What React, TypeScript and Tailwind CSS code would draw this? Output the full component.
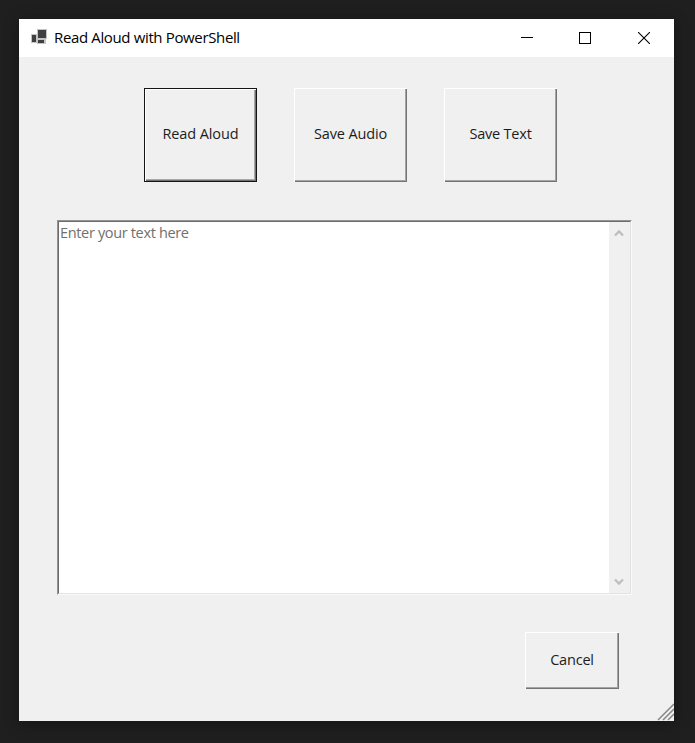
import type { ReactNode } from "react";

function TitleBar() {
  return (
    <header className="flex h-[38px] shrink-0 items-center bg-white text-black">
      <svg className="ml-[12px] h-5 w-[18px]" viewBox="0 0 18 20" shapeRendering="crispEdges">
        <path fill="#c4c4c4" d="M6 1h10v10H6zM0 6h6v9H0zM6 11h9v5H6z" />
        <path fill="#404040" d="M7 2h8v8H7zM1 7h4v7H1zM7 12h6v3H7z" />
      </svg>
      <h1 className="ml-[5px] pb-[2px] text-[15px] leading-5 font-normal tracking-[-0.36px] whitespace-nowrap">
        Read Aloud with PowerShell
      </h1>
      <div className="ml-auto flex h-full">
        <button aria-label="Minimize" className="flex w-[58px] items-center justify-center">
          <svg width="12" height="12" shapeRendering="crispEdges">
            <path d="M0 5.5h12" stroke="#000" />
          </svg>
        </button>
        <button aria-label="Maximize" className="flex w-[58px] items-center justify-center">
          <svg width="12" height="12" shapeRendering="crispEdges">
            <path d="M.5.5h11v11H.5z" fill="none" stroke="#000" />
          </svg>
        </button>
        <button aria-label="Close" className="flex w-[60px] items-center justify-center">
          <svg width="12" height="12">
            <path d="M0 0l12 12M12 0L0 12" stroke="#000" strokeWidth="1.1" />
          </svg>
        </button>
      </div>
    </header>
  );
}

function ClassicButton({ children, size, focused = false }: { children: ReactNode; size: string; focused?: boolean }) {
  return (
    <button
      className={`${size} flex items-center justify-center text-[14.5px] leading-5 text-[#1c1c1c] whitespace-nowrap ${
        focused
          ? "border border-[#141414] shadow-[inset_1px_1px_#fff,inset_-1px_-1px_#707070,inset_-2px_-2px_#a8a8a8]"
          : "shadow-[inset_1px_1px_#fff,inset_-1px_-1px_#747474,inset_-2px_-2px_#a4a4a4]"
      }`}
    >
      {children}
    </button>
  );
}

export default function App() {
  return (
    <main className="h-[743px] w-[695px] overflow-hidden bg-[#1f1f1f] pt-[19px] pl-[19px] font-['Open_Sans','Noto_Sans',sans-serif]">
      <section className="flex h-[702px] w-[655px] flex-col bg-[#f0f0f0] shadow-[0_3px_14px_rgba(0,0,0,0.35)]">
        <TitleBar />
        <div className="mt-[31px] ml-[125px] flex gap-[37px]">
          <ClassicButton size="w-[113px] h-[94px] pb-[2px]" focused>
            <span className="tracking-[-0.1px]">Read Aloud</span>
          </ClassicButton>
          <ClassicButton size="w-[113px] h-[94px] pb-[2px]">
            <span className="tracking-[-0.14px]">Save Audio</span>
          </ClassicButton>
          <ClassicButton size="w-[113px] h-[94px] pb-[2px]">
            <span className="tracking-[-0.2px]">Save Text</span>
          </ClassicButton>
        </div>
        <div className="mt-[38px] ml-[38px] flex h-[375px] w-[575px] border border-t-[#939393] border-r-[#fafafa] border-b-[#fafafa] border-l-[#939393]">
          <div className="flex w-full border border-t-[#6c6c6c] border-r-[#e0e0e0] border-b-[#e3e3e3] border-l-[#6c6c6c] bg-white">
            <p className="flex-1 pt-px pl-px text-[14.5px] leading-[20px] tracking-[-0.34px] text-[#707070]">Enter your text here</p>
            <div className="flex w-[21px] flex-col items-center justify-between bg-[#f0f0f0] pt-[7px] pr-[2px] pb-[7px]">
              <svg width="10" height="9" viewBox="0 0 10 9">
                <path d="M1 6.5l4-4 4 4" fill="none" stroke="#bebebe" strokeWidth="2.3" />
              </svg>
              <svg width="10" height="9" viewBox="0 0 10 9">
                <path d="M1 2.5l4 4 4-4" fill="none" stroke="#bebebe" strokeWidth="2.3" />
              </svg>
            </div>
          </div>
        </div>
        <div className="mt-[37px] ml-[506px]">
          <ClassicButton size="w-[94px] h-[57px] pb-[2px]">
            <span className="tracking-[-0.2px]">Cancel</span>
          </ClassicButton>
        </div>
        <svg className="mt-auto ml-auto" width="17" height="18" viewBox="0 0 17 18">
          <path d="M1 17L17 1M6 17L17 6M11 17l6-6" stroke="#858585" strokeWidth="1.5" />
        </svg>
      </section>
    </main>
  );
}
